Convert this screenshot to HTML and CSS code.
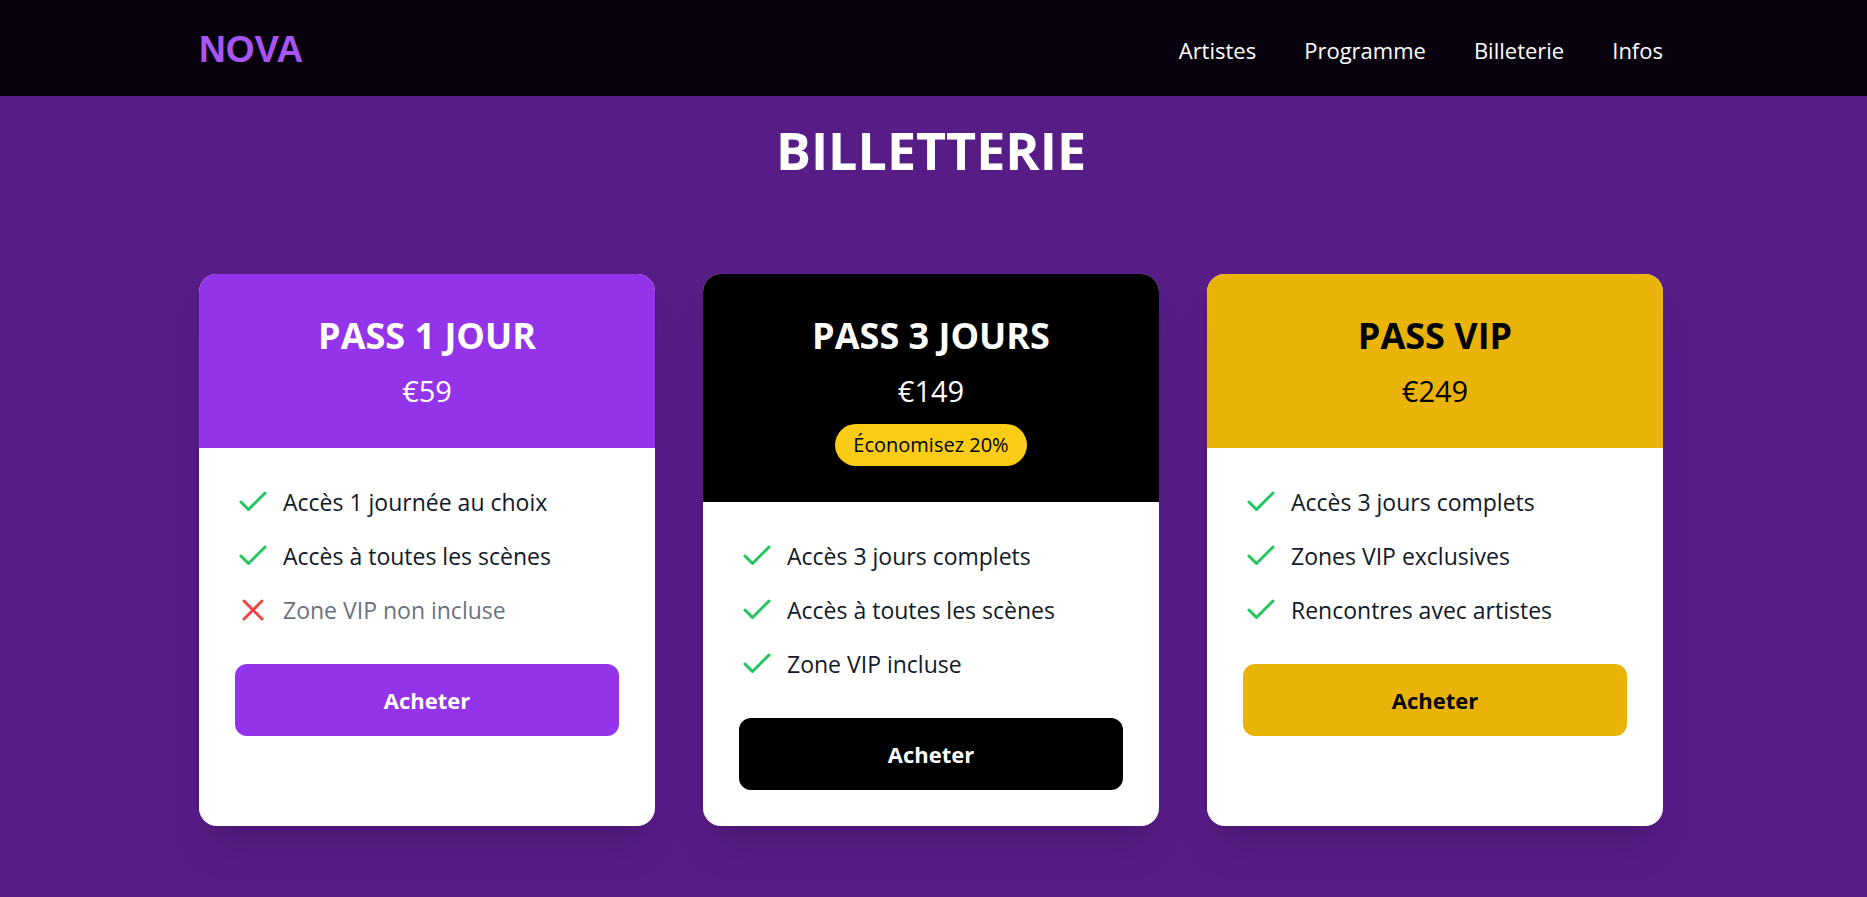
FILE: index.html
```html
<!DOCTYPE html>
<html lang="fr">
<head>
<meta charset="utf-8">
<title>NOVA – Billetterie</title>
<link rel="stylesheet" href="styles.css">
</head>
<body>
<svg class="sprite" aria-hidden="true">
  <symbol id="check" viewBox="0 0 24 24"><path d="M20 6 9 17l-5-5"/></symbol>
  <symbol id="cross" viewBox="0 0 24 24"><path d="M18 6 6 18M6 6l12 12"/></symbol>
</svg>
<header class="navbar">
  <div class="container navbar-row">
    <a class="brand" href="#">NOVA</a>
    <nav class="links">
      <a href="#artistes">Artistes</a>
      <a href="#programme">Programme</a>
      <a href="#billetterie">Billeterie</a>
      <a href="#infos">Infos</a>
    </nav>
  </div>
</header>
<main class="container tickets" id="billetterie">
  <h1 class="title">BILLETTERIE</h1>
  <div class="cards">
    <article class="card card-day">
      <div class="card-head">
        <h2>PASS 1 JOUR</h2>
        <p class="price">€59</p>
      </div>
      <div class="card-body">
        <ul class="features">
          <li><svg class="icon"><use href="#check"/></svg>Accès 1 journée au choix</li>
          <li><svg class="icon"><use href="#check"/></svg>Accès à toutes les scènes</li>
          <li class="excluded"><svg class="icon"><use href="#cross"/></svg>Zone VIP non incluse</li>
        </ul>
        <button class="buy" type="button">Acheter</button>
      </div>
    </article>
    <article class="card card-full">
      <div class="card-head">
        <h2>PASS 3 JOURS</h2>
        <p class="price">€149</p>
        <span class="badge">Économisez 20%</span>
      </div>
      <div class="card-body">
        <ul class="features">
          <li><svg class="icon"><use href="#check"/></svg>Accès 3 jours complets</li>
          <li><svg class="icon"><use href="#check"/></svg>Accès à toutes les scènes</li>
          <li><svg class="icon"><use href="#check"/></svg>Zone VIP incluse</li>
        </ul>
        <button class="buy" type="button">Acheter</button>
      </div>
    </article>
    <article class="card card-vip">
      <div class="card-head">
        <h2>PASS VIP</h2>
        <p class="price">€249</p>
      </div>
      <div class="card-body">
        <ul class="features">
          <li><svg class="icon"><use href="#check"/></svg>Accès 3 jours complets</li>
          <li><svg class="icon"><use href="#check"/></svg>Zones VIP exclusives</li>
          <li><svg class="icon"><use href="#check"/></svg>Rencontres avec artistes</li>
        </ul>
        <button class="buy" type="button">Acheter</button>
      </div>
    </article>
  </div>
</main>
</body>
</html>
```
FILE: styles.css
```css
* { box-sizing: border-box; margin: 0; padding: 0; }

body {
  min-height: 100vh;
  padding-right: 5px;
  background: #581c87;
  color: #111827;
  font: 23px/36px "Segoe UI", "Open Sans", "Noto Sans", sans-serif;
}

a { color: inherit; text-decoration: none; }

.sprite { position: absolute; width: 0; height: 0; }

.container { max-width: 1536px; margin: 0 auto; padding: 0 36px; }

.navbar { margin-right: -5px; padding: 26px 5px 22px 0; background: #07020d; }
.navbar-row { display: flex; align-items: center; justify-content: space-between; }
.brand {
  color: #a855f7;
  font: bold 37px/48px "Liberation Sans", Arial, sans-serif;
}
.links { display: flex; gap: 48px; color: #fff; font-size: 22px; font-weight: 500; }

.tickets { padding-top: 24px; padding-bottom: 70px; }
.title {
  margin-bottom: 94px;
  color: #fff;
  font-size: 52px;
  line-height: 60px;
  text-align: center;
}

.cards { display: grid; grid-template-columns: repeat(3, 1fr); gap: 48px; }
.card {
  overflow: hidden;
  border-radius: 18px;
  background: #fff;
  box-shadow: 0 30px 38px -8px rgba(0, 0, 0, .1), 0 12px 15px -9px rgba(0, 0, 0, .1);
}
.card-head { padding: 38px 36px 36px; text-align: center; }
.card-head h2 { margin-bottom: 10px; font-size: 36px; line-height: 48px; }
.price { font-size: 29px; line-height: 42px; }
.badge {
  display: block;
  width: fit-content;
  margin: 12px auto 0;
  padding: 6px 18px;
  border-radius: 21px;
  background: #facc15;
  color: #000;
  font-size: 20px;
  line-height: 30px;
}

.card-body { padding: 36px; }
.features { display: grid; gap: 18px; margin-bottom: 36px; list-style: none; }
.features li { display: flex; align-items: center; gap: 12px; }
.icon {
  flex: none;
  width: 36px;
  height: 36px;
  fill: none;
  stroke: #22c55e;
  stroke-width: 2;
  stroke-linecap: round;
  stroke-linejoin: round;
}
.excluded { color: #6b7280; }
.excluded .icon { stroke: #ef4444; }

.buy {
  display: block;
  width: 100%;
  padding: 18px;
  border: 0;
  border-radius: 12px;
  font: inherit;
  font-size: 22px;
  font-weight: bold;
  cursor: pointer;
}

.card-day .card-head, .card-day .buy { background: #9333ea; color: #fff; }
.card-full .card-head, .card-full .buy { background: #000; color: #fff; }
.card-vip .card-head, .card-vip .buy { background: #eab308; color: #000; }
```
